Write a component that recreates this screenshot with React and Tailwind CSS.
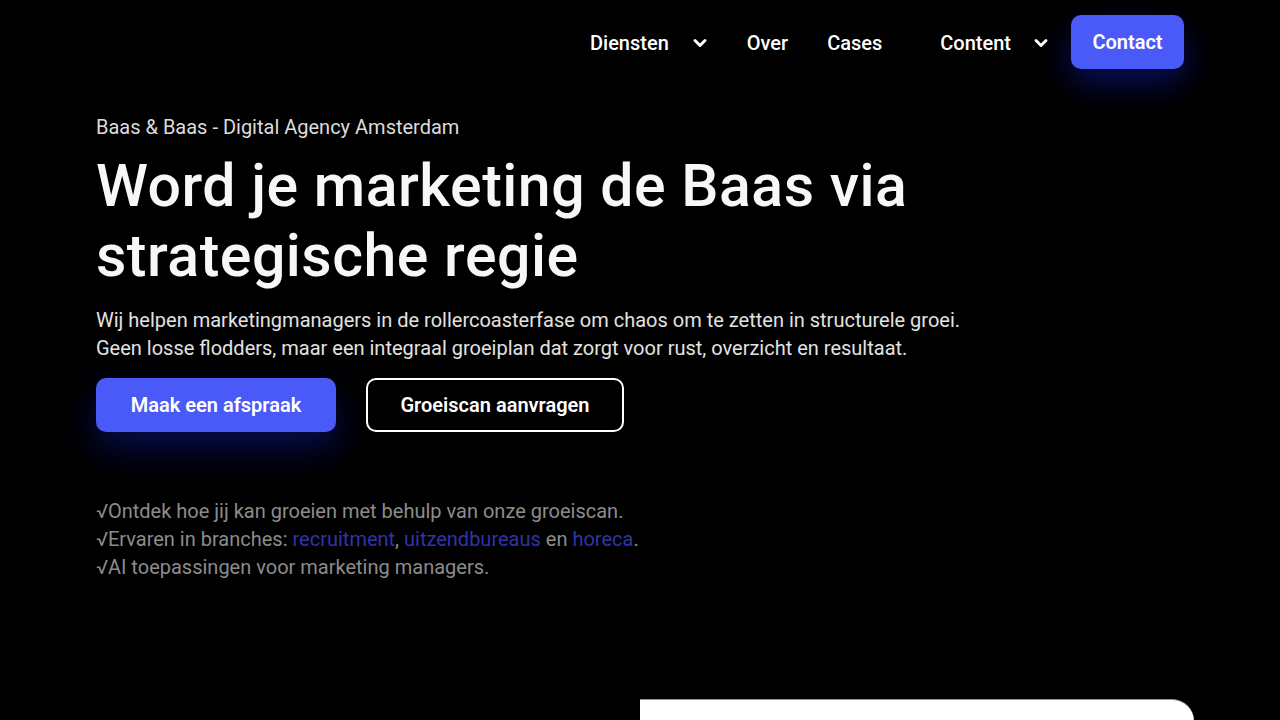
import { ChevronDown } from "lucide-react"

export default function App() {
  return (
    <div className="min-h-screen w-full bg-black text-white overflow-hidden font-[Roboto,sans-serif]">
      {/* Nav */}
      <header className="flex justify-end items-center h-[84px] pr-[96px] pt-[1px]">
        <nav className="flex items-center text-[20px] font-medium">
          <div className="flex items-center gap-[21px]">
            <span>Diensten</span>
            <ChevronDown size={20} strokeWidth={3.5} />
          </div>
          <span className="ml-[37px]">Over</span>
          <span className="ml-[39px]">Cases</span>
          <div className="flex items-center gap-[20px] ml-[58px]">
            <span>Content</span>
            <ChevronDown size={20} strokeWidth={3.5} />
          </div>
          <button className="ml-[20px] -mt-[1px] h-[54px] w-[113px] rounded-[10px] bg-[#4a5af8] font-semibold text-[20px] shadow-[0_14px_30px_rgba(20,40,255,0.35)]">
            Contact
          </button>
        </nav>
      </header>

      {/* Hero */}
      <section className="pl-[96px] pt-[28px]">
        <p className="text-[20px] text-[#dcdcdc] leading-[30px]">Baas &amp; Baas - Digital Agency Amsterdam</p>
        <h1 className="mt-[9px] text-[59px] font-medium leading-[70px] tracking-[0.5px] text-[#f7f7f7]">
          Word je marketing de Baas via<br />strategische regie
        </h1>
        <p className="mt-[15px] text-[20px] leading-[28px] text-[#e2e2e2]">
          Wij helpen marketingmanagers in de rollercoasterfase om chaos om te zetten in structurele groei.
          <br />
          Geen losse flodders, maar een integraal groeiplan dat zorgt voor rust, overzicht en resultaat.
        </p>
        <div className="flex gap-[30px] mt-[16px]">
          <button className="h-[54px] w-[240px] rounded-[10px] bg-[#4a5af8] text-[20px] font-semibold shadow-[0_16px_34px_rgba(20,40,255,0.3)]">
            Maak een afspraak
          </button>
          <button className="h-[54px] w-[258px] rounded-[10px] border-2 border-white text-[20px] font-semibold">
            Groeiscan aanvragen
          </button>
        </div>

        <ul className="mt-[65px] text-[20px] leading-[28px] text-[#8c8c8c]">
          <li>√Ontdek hoe jij kan groeien met behulp van onze groeiscan.</li>
          <li>
            √Ervaren in branches: <span className="text-[#3034aa]">recruitment</span>,{" "}
            <span className="text-[#3034aa]">uitzendbureaus</span> en <span className="text-[#3034aa]">horeca</span>.
          </li>
          <li>√AI toepassingen voor marketing managers.</li>
        </ul>
      </section>

      <div className="flex pl-[640px] mt-[118px]">
        <div className="w-[554px] h-[60px] bg-white border-t border-[#9a9a9a] rounded-tr-[22px]" />
      </div>
    </div>
  )
}
